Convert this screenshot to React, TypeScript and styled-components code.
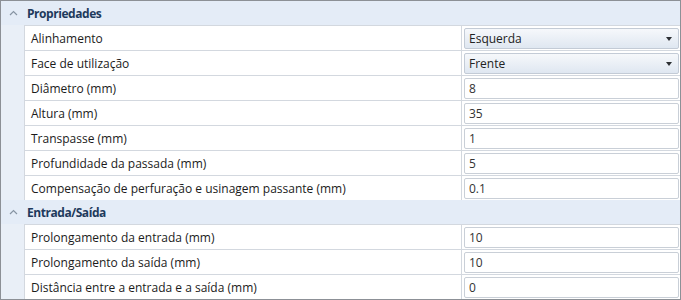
import React from 'react';
import styled, { createGlobalStyle } from 'styled-components';

type Prop = { label: string; value: string; select?: boolean };
type Category = { title: string; props: Prop[] };

const categories: Category[] = [
  {
    title: 'Propriedades',
    props: [
      { label: 'Alinhamento', value: 'Esquerda', select: true },
      { label: 'Face de utilização', value: 'Frente', select: true },
      { label: 'Diâmetro (mm)', value: '8' },
      { label: 'Altura (mm)', value: '35' },
      { label: 'Transpasse (mm)', value: '1' },
      { label: 'Profundidade da passada (mm)', value: '5' },
      { label: 'Compensação de perfuração e usinagem passante (mm)', value: '0.1' },
    ],
  },
  {
    title: 'Entrada/Saída',
    props: [
      { label: 'Prolongamento da entrada (mm)', value: '10' },
      { label: 'Prolongamento da saída (mm)', value: '10' },
      { label: 'Distância entre a entrada e a saída (mm)', value: '0' },
    ],
  },
];

const App = () => {
  return (
    <>
      <GlobalStyle />
      <Grid>
        {categories.map(cat => (
          <Section key={cat.title}>
            <Header>
              <Chevron>
                <svg width="9" height="6" viewBox="0 0 9 6">
                  <path d="M1 5 L4.5 1.5 L8 5" fill="none" stroke="#8794a3" strokeWidth="1.2" />
                </svg>
              </Chevron>
              <Title>{cat.title}</Title>
            </Header>
            {cat.props.map(p => (
              <Row key={p.label}>
                <Gutter />
                <Name>{p.label}</Name>
                <ValueCell>
                  {p.select ? (
                    <Select>
                      <span>{p.value}</span>
                      <Arrow />
                    </Select>
                  ) : (
                    <Field>{p.value}</Field>
                  )}
                </ValueCell>
              </Row>
            ))}
          </Section>
        ))}
      </Grid>
    </>
  );
};

const GlobalStyle = createGlobalStyle`
  html, body {
    margin: 0;
    padding: 0;
    background: #fff;
  }
  body {
    font-family: 'Open Sans', 'Noto Sans', sans-serif;
    font-size: 12px;
  }
`;

const Grid = styled.div`
  width: 681px;
  height: 300px;
  box-sizing: border-box;
  border: 1px solid #8c9096;
  background: #e9eff7;
  overflow: hidden;
`;

const Section = styled.div`
  display: flex;
  flex-direction: column;
`;

const Header = styled.div`
  height: 24px;
  display: flex;
  align-items: center;
  background: #e4ecf7;
`;

const Chevron = styled.div`
  width: 24px;
  display: flex;
  justify-content: center;
  align-items: center;
  padding-bottom: 1px;
`;

const Title = styled.div`
  font-weight: 700;
  color: #1e3a5c;
  padding-left: 2px;
  letter-spacing: -0.45px;
`;

const Row = styled.div`
  display: grid;
  grid-template-columns: 23px 1fr 219px;
  height: 25px;
`;

const Gutter = styled.div`
  background: #e9eff7;
`;

const Name = styled.div`
  display: flex;
  align-items: center;
  padding-left: 6px;
  background: #fff;
  color: #1b1b1b;
  border-left: 1px solid #d3d8df;
  border-top: 1px solid #d3d8df;
  white-space: nowrap;
  overflow: hidden;
`;

const ValueCell = styled.div`
  display: flex;
  background: #fff;
  border-left: 1px solid #d3d8df;
  border-top: 1px solid #d3d8df;
  padding: 2px 1px 1px 2px;
`;

const Field = styled.div`
  flex: 1;
  display: flex;
  align-items: center;
  border: 1px solid #c9cfd7;
  border-radius: 2px;
  padding-left: 4px;
  color: #333;
  background: #fff;
`;

const Select = styled(Field)`
  justify-content: space-between;
  padding-right: 6px;
  background: linear-gradient(#f6f8fb, #dfe7f1);
  border-color: #c3cbd6;
  color: #222;
`;

const Arrow = styled.div`
  width: 0;
  height: 0;
  border-left: 3.5px solid transparent;
  border-right: 3.5px solid transparent;
  border-top: 4px solid #2c2f33;
`;

export default App;
